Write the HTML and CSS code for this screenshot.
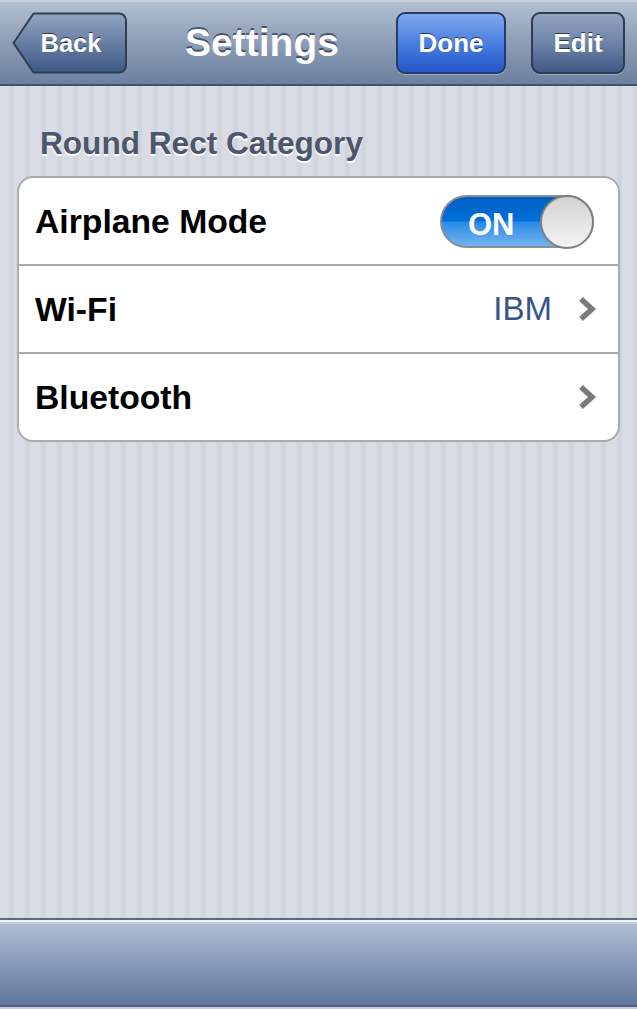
FILE: index.html
```html
<!DOCTYPE html>
<html>
<head>
<meta charset="utf-8">
<link rel="stylesheet" href="styles.css">
</head>
<body>
<div class="screen">
  <header class="navbar">
    <button class="btn-back">
      <svg class="back-shape" width="116" height="63" viewBox="0 0 116 63">
        <defs>
          <linearGradient id="bg" x1="0" y1="0" x2="0" y2="1">
            <stop offset="0" stop-color="#93a5bf"/>
            <stop offset="1" stop-color="#3d5887"/>
          </linearGradient>
        </defs>
        <path d="M21.5,1.5 H107 a7 7 0 0 1 7 7 V53.5 a7 7 0 0 1 -7 7 H21.5 L1.5,31 Z" fill="url(#bg)" stroke="#2f3c52" stroke-width="2" stroke-linejoin="round"/>
      </svg>
      <span class="back-label">Back</span>
    </button>
    <h1 class="nav-title">Settings</h1>
    <button class="btn btn-done">Done</button>
    <button class="btn btn-edit">Edit</button>
  </header>

  <main class="content">
    <h2 class="section-title">Round Rect Category</h2>
    <ul class="group">
      <li class="row">
        <span class="row-label">Airplane Mode</span>
        <span class="switch"><span class="switch-on">ON</span><span class="knob"></span></span>
      </li>
      <li class="row">
        <span class="row-label">Wi-Fi</span>
        <span class="row-value">IBM</span>
        <svg class="chevron" width="20" height="26" viewBox="0 0 20 26"><polyline points="3,3 14,13 3,23" fill="none" stroke="#7b7b7b" stroke-width="5.5" stroke-linejoin="miter"/></svg>
      </li>
      <li class="row">
        <span class="row-label">Bluetooth</span>
        <span class="row-value"></span>
        <svg class="chevron" width="20" height="26" viewBox="0 0 20 26"><polyline points="3,3 14,13 3,23" fill="none" stroke="#7b7b7b" stroke-width="5.5" stroke-linejoin="miter"/></svg>
      </li>
    </ul>
  </main>

  <footer class="toolbar"></footer>
</div>
</body>
</html>
```
FILE: styles.css
```css
html, body {
  margin: 0;
  padding: 0;
  height: 100%;
}
body {
  font-family: "Liberation Sans", Arial, Helvetica, sans-serif;
}
.screen {
  width: 637px;
  height: 1009px;
  display: flex;
  flex-direction: column;
  overflow: hidden;
}

/* Nav bar */
.navbar {
  flex: none;
  display: flex;
  align-items: center;
  padding: 0 12px;
  box-sizing: border-box;
  border-top: 2px solid #c9d2de;
  border-bottom: 2px solid #3f5070;
  height: 86px;
  background: linear-gradient(#b3bfcf, #8c9db7 50%, #6b81a0);
}
.btn-back {
  position: relative;
  width: 116px;
  height: 63px;
  padding: 0 0 0 2px;
  margin-top: 0;
  border: none;
  background: none;
  flex: none;
  font: bold 25.5px "Liberation Sans", Arial, sans-serif;
  color: #fff;
  text-shadow: 0 -1px 0 rgba(20, 30, 50, 0.75);
}
.back-shape {
  position: absolute;
  left: 0;
  top: 0;
}
.back-label {
  position: relative;
}
.nav-title {
  flex: 1;
  margin: 0;
  text-align: center;
  font-size: 39px;
  font-weight: bold;
  color: #fff;
  text-shadow: 0 -2px 0 rgba(40, 50, 70, 0.7);
}
.btn {
  flex: none;
  height: 62px;
  margin-top: 0;
  border: 2px solid #2e3b52;
  border-radius: 9px;
  font: bold 26px "Liberation Sans", Arial, sans-serif;
  color: #fff;
  text-shadow: 0 -1px 0 rgba(20, 30, 50, 0.75);
  box-shadow: 0 1px 0 rgba(255, 255, 255, 0.3);
  padding: 0;
}
.btn-done {
  width: 110px;
  background: linear-gradient(#80a8ef, #4a7fe0 50%, #2356c7);
  border-color: #2a3a66;
}
.btn-edit {
  width: 94px;
  margin-left: 25px;
  background: linear-gradient(#93a4be, #6e84a7 50%, #3f5886);
}

/* Content */
.content {
  flex: 1;
  background: repeating-linear-gradient(90deg, #d8dce5 0, #d8dce5 9px, #d0d5de 9px, #d0d5de 14px, #d8dce5 14px, #d8dce5 16px);
  padding: 0 17px;
  box-sizing: border-box;
}
.section-title {
  margin: 39px 0 0 23px;
  font-size: 31.6px;
  font-weight: bold;
  color: #4c566c;
  text-shadow: 0 2px 0 #fff;
  line-height: 36px;
}
.group {
  list-style: none;
  margin: 15px 0 0 0;
  padding: 0;
  background: #fff;
  border: 2px solid #a9abaf;
  border-radius: 16px;
}
.row {
  height: 86px;
  display: flex;
  align-items: center;
  padding: 0 20px 0 16px;
  border-top: 2px solid #a9abaf;
}
.row:first-child {
  border-top: none;
}
.row-label {
  flex: 1;
  font-size: 33.7px;
  font-weight: bold;
  color: #000;
}
.row-value {
  font-size: 33px;
  color: #385487;
  margin-right: 26px;
}
.chevron {
  flex: none;
}

/* Switch */
.switch {
  position: relative;
  width: 154px;
  height: 53px;
  box-sizing: border-box;
  border-radius: 27px;
  border: 2px solid #8d8f93;
  background: linear-gradient(#005fc2, #0070d8 48%, #2a8be6 52%, #74b4ef);
  display: flex;
  align-items: center;
  margin-right: 4px;
}
.switch-on {
  font-size: 31px;
  font-weight: bold;
  color: #fff;
  margin-left: 26px;
  padding-top: 8px;
}
.knob {
  position: absolute;
  right: -2px;
  top: -2px;
  width: 54px;
  height: 54px;
  box-sizing: border-box;
  border-radius: 50%;
  border: 2px solid #7e7f82;
  background: linear-gradient(#d2d2d2, #f3f3f3);
}

/* Toolbar */
.toolbar {
  flex: none;
  height: 91px;
  box-sizing: border-box;
  border-top: 2px solid #5a6a85;
  box-shadow: inset 0 2px 0 #eef1f5, inset 0 4px 0 #c3cedd, inset 0 -2px 0 #c5cedb, inset 0 -4px 0 #4f6283;
  background: linear-gradient(#b1c0d6, #8a9dbb 45%, #5b7399);
}
```
